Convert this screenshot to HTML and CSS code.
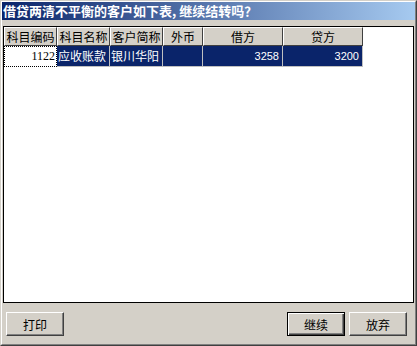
FILE: index.html
```html
<!DOCTYPE html>
<html>
<head>
<meta charset="utf-8">
<link rel="stylesheet" href="styles.css">
</head>
<body>
<div class="window">
  <div class="frame">
    <div class="title">借贷两清不平衡的客户如下表, 继续结转吗？</div>
    <div class="content">
      <div class="grid">
        <div class="table">
          <div class="hcell">科目编码</div>
          <div class="hcell">科目名称</div>
          <div class="hcell">客户简称</div>
          <div class="hcell">外币</div>
          <div class="hcell">借方</div>
          <div class="hcell">贷方</div>
          <div class="dcell focus num-serif">1122</div>
          <div class="dcell sel">应收账款</div>
          <div class="dcell sel">银川华阳</div>
          <div class="dcell sel"></div>
          <div class="dcell sel num">3258</div>
          <div class="dcell sel num">3200</div>
        </div>
      </div>
      <div class="buttons">
        <button class="btn">打印</button>
        <div class="spacer"></div>
        <button class="btn default">继续</button>
        <button class="btn">放弃</button>
      </div>
    </div>
  </div>
</div>
</body>
</html>
```

FILE: styles.css
```css
* { box-sizing: border-box; }
html, body { margin: 0; padding: 0; }
body { width: 417px; height: 346px; overflow: hidden; background: #d4d0c8; }

.window {
  width: 417px;
  height: 346px;
  background: #d4d0c8;
  border-top: 1px solid #d4d0c8;
  border-left: 1px solid #d4d0c8;
  border-right: 1px solid #404040;
  border-bottom: 1px solid #404040;
}
.frame {
  height: 100%;
  border-top: 1px solid #ffffff;
  border-left: 1px solid #ffffff;
  border-right: 1px solid #808080;
  border-bottom: 1px solid #808080;
  display: flex;
  flex-direction: column;
}
.title {
  height: 18px;
  margin: 0;
  background: linear-gradient(to right, #0a246a, #a6caf0);
  color: #ffffff;
  font-family: "Noto Sans CJK SC", sans-serif;
  font-weight: bold;
  font-size: 13px;
  line-height: 18px;
  padding-left: 1px;
  white-space: nowrap;
}
.content {
  flex: 1;
  padding: 6px 1px 6px 1px;
  display: flex;
  flex-direction: column;
}
.grid {
  height: 277px;
  background: #ffffff;
  border: 1px solid #000000;
}
.table {
  display: grid;
  grid-template-columns: 53px 53px 53px 40px 80px 80px;
  grid-template-rows: 19px 21px;
  width: 359px;
}
.hcell {
  background: #d4d0c8;
  border-top: 1px solid #ffffff;
  border-left: 1px solid #ffffff;
  border-right: 1px solid #404040;
  border-bottom: 1px solid #404040;
  font-family: "Noto Sans CJK SC", sans-serif;
  font-size: 12px;
  line-height: 17px;
  text-align: center;
  color: #000;
  white-space: nowrap;
  overflow: hidden;
}
.dcell {
  border-right: 1px solid #c0c0c0;
  border-bottom: 1px solid #c0c0c0;
  font-family: "Noto Sans CJK SC", sans-serif;
  font-size: 12px;
  line-height: 20px;
  white-space: nowrap;
  overflow: hidden;
  padding: 0 1px;
}
.sel { background: #0a246a; color: #ffffff; }
.focus {
  background: #ffffff;
  color: #000000;
  border: 1px dotted #000000;
  line-height: 18px;
}
.num-serif {
  font-family: "Liberation Serif", serif;
  font-size: 12px;
  text-align: right;
}
.num {
  font-family: "Liberation Sans", sans-serif;
  font-size: 11px;
  text-align: right;
  padding-right: 3px;
}
.buttons {
  margin-top: 9px;
  display: flex;
  gap: 4px;
  padding: 0 7px 0 3px;
}
.spacer { flex: 1; }
.btn {
  width: 58px;
  height: 24px;
  padding: 0;
  margin: 0;
  background: #d4d0c8;
  font-family: "Noto Sans CJK SC", sans-serif;
  font-size: 12px;
  color: #000;
  border-top: 1px solid #ffffff;
  border-left: 1px solid #ffffff;
  border-right: 1px solid #404040;
  border-bottom: 1px solid #404040;
  box-shadow: inset -1px -1px 0 #808080;
  cursor: default;
}
.btn.default {
  border: 1px solid #000000;
  box-shadow: inset 1px 1px 0 #ffffff, inset -1px -1px 0 #404040, inset -2px -2px 0 #808080;
}
```
